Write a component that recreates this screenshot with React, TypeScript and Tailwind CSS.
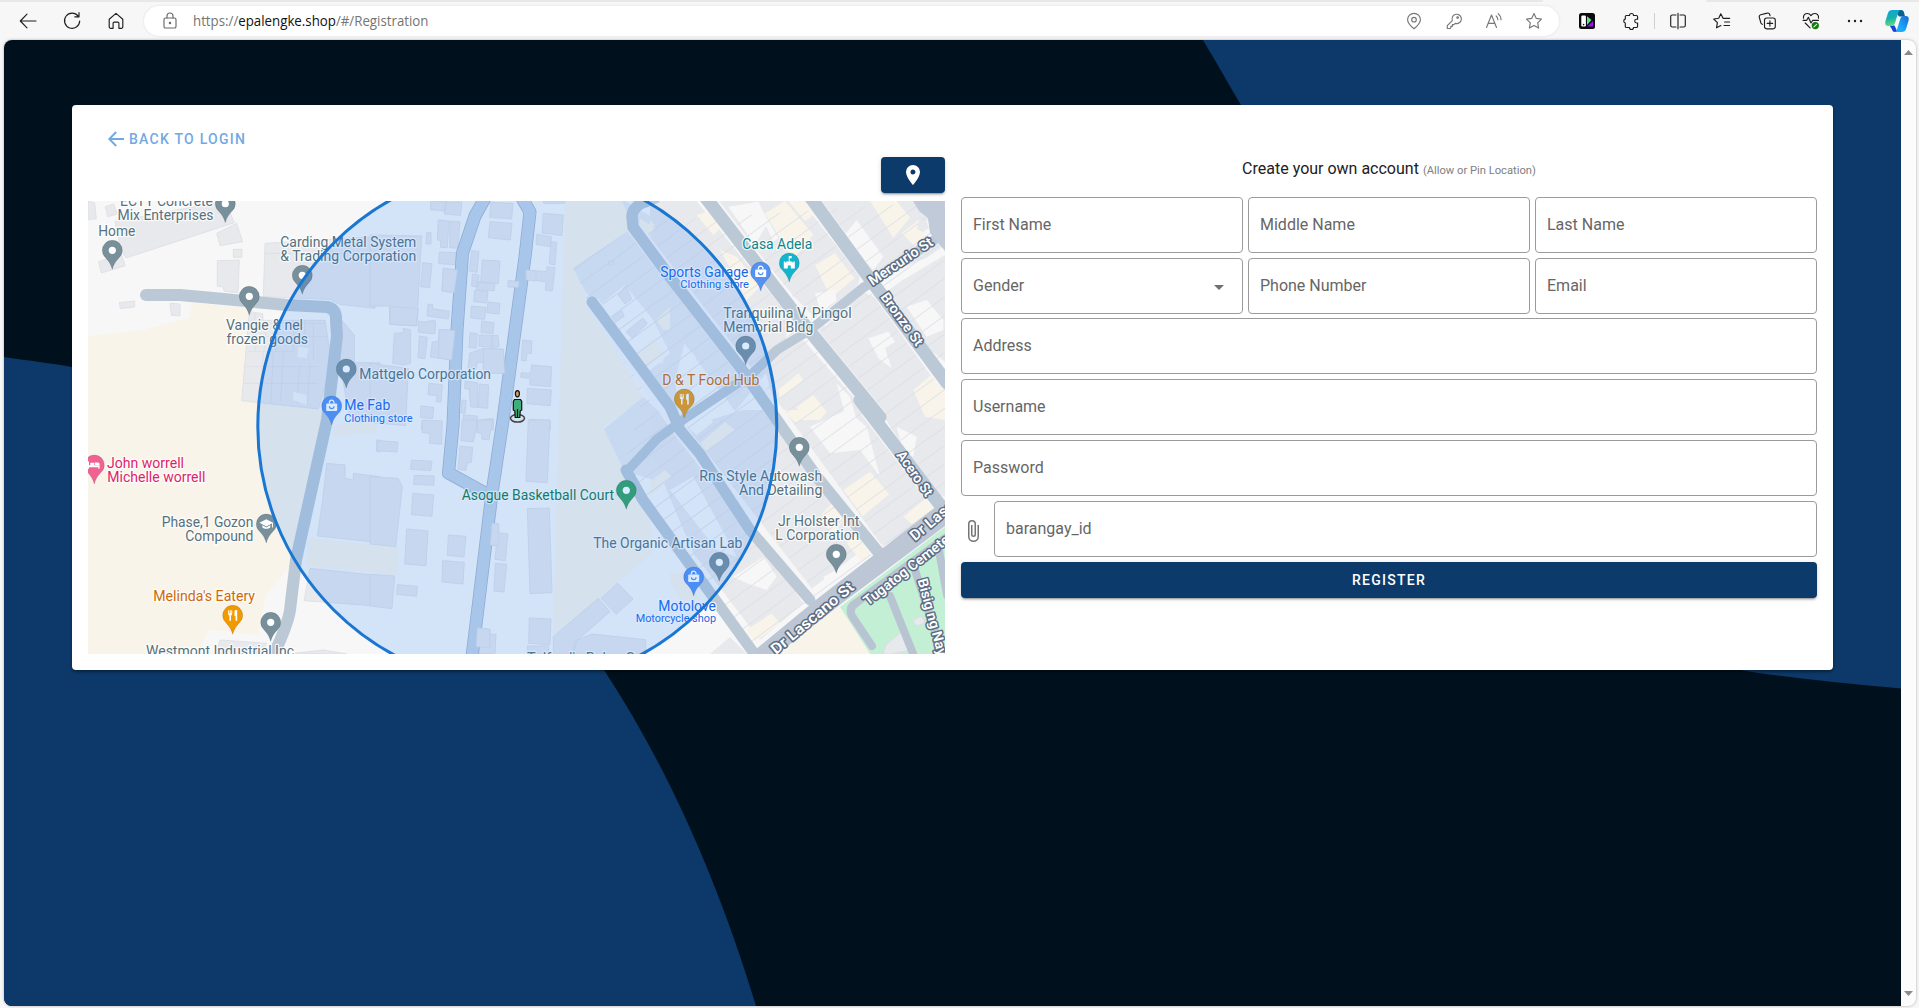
import React from "react";

const GREY = "#78909c";
const BLD = "#e8e9ed";
const EDGE = "#dcdee5";
const BEIGE = "#f9f4e9";
const ROAD = "#bbc9d6";

/* ---------- toolbar ---------- */

type IconProps = { children: React.ReactNode; color?: string; size?: number };

const Line = ({ children, color = "#1f1f1f", size = 20 }: IconProps) => (
  <svg width={size} height={size} viewBox="0 0 20 20" fill="none" stroke={color} strokeWidth={1.15} strokeLinecap="round" strokeLinejoin="round">
    {children}
  </svg>
);

const Cell = ({ children, className = "w-11" }: { children: React.ReactNode; className?: string }) => (
  <button className={`flex h-8 shrink-0 items-center justify-center ${className}`}>{children}</button>
);

const STAR = "M10 2.6l2.3 4.8 5.2.7-3.8 3.7.9 5.3L10 14.6l-4.6 2.5.9-5.3L2.5 8.1l5.2-.7z";

function Toolbar() {
  return (
    <header className="h-10 shrink-0 bg-[#f7f7f7]">
      <div className="flex h-[2px] justify-between">
        <div className="w-[1543px] rounded-br-lg bg-[#e8e8e8]" />
        <div className="w-[213px] rounded-bl-lg bg-[#e8e8e8]" />
      </div>
      <div className="flex h-[38px] items-center pl-[6px]">
        <Cell>
          <Line><path d="M18 10H2.5M9 3.2L2.3 10 9 16.8" /></Line>
        </Cell>
        <Cell>
          <Line><path d="M16.2 5.2A7.6 7.6 0 1 0 17.7 10M17 1.6v4.2h-4.2" /></Line>
        </Cell>
        <Cell>
          <Line><path d="M3.2 8.2L10 2.4l6.8 5.8v7.6a1.5 1.5 0 0 1-1.5 1.5h-2.4v-5a1.2 1.2 0 0 0-1.2-1.2H8.3a1.2 1.2 0 0 0-1.2 1.2v5H4.7a1.5 1.5 0 0 1-1.5-1.5z" /></Line>
        </Cell>
        <div className="ml-[6px] flex h-[30px] w-[1415px] shrink-0 items-center rounded-full bg-white pl-4 pr-[5px] shadow-[0_0_3px_rgba(0,0,0,0.1)]">
          <Line color="#6b6b6b">
            <rect x="4" y="7" width="12" height="10" rx="1.6" />
            <path d="M7 7V5a3 3 0 0 1 6 0v2" />
            <circle cx="10" cy="12" r=".7" fill="#6b6b6b" />
          </Line>
          <svg width="237" height="24" className="ml-[13px] overflow-visible">
            <text x="0" y="17" fontFamily='"Open Sans", sans-serif' fontSize="13.6" fill="#757575" textLength="235.5" lengthAdjust="spacingAndGlyphs">
              https://<tspan fill="#111">epalengke.shop</tspan>/#/Registration
            </text>
          </svg>
          <div className="ml-auto flex">
            <Cell className="w-10">
              <Line color="#777">
                <path d="M10 17.8C6 14.4 3.6 11.600 3.600 8.700a6.400 6.400 0 0 1 12.800 0c0 2.900-2.400 5.700-6.400 9.100z" />
                <circle cx="10" cy="8.700" r="2.300" />
              </Line>
            </Cell>
            <Cell className="w-10">
              <Line color="#777">
                <path d="M8.300 9.600a4.700 4.700 0 1 1 3 2.800l-1.300 1.200H8.400v1.700H6.800v1.500l-.7.700H3.300v-2.800z" />
                <circle cx="13.600" cy="6.600" r=".8" />
              </Line>
            </Cell>
            <Cell className="w-10">
              <Line color="#777">
                <path d="M2.500 16.500L7.500 4l5 12.500M4.200 12.300h6.600M12.200 5a5 5 0 0 1 1.600 3.800M14.200 2.600a8 8 0 0 1 2.800 6.200" />
              </Line>
            </Cell>
            <Cell className="w-10">
              <Line color="#777"><path d={STAR} /></Line>
            </Cell>
          </div>
        </div>
        <div className="ml-[6px] flex">
          <Cell>
            <svg width="16" height="16" viewBox="0 0 16 16">
              <rect width="16" height="16" rx="2.500" fill="#0b0b0f" />
              <rect x="2.300" y="2.500" width="4.600" height="11" rx="1.200" fill="#fff" />
              <circle cx="4.600" cy="11.600" r=".8" fill="#111" />
              <path d="M8 3.200L12.500 7 8 12z" fill="#5ee08f" />
              <path d="M8.300 13.600L14 8v5.600z" fill="#a30cf5" />
            </svg>
          </Cell>
          <Cell>
            <Line>
              <path d="M5.500 4.500h3a2 2 0 0 1 4 0h2.800a1.300 1.300 0 0 1 1.300 1.300v2.400h-1a1.900 1.900 0 0 0 0 3.800h1v3.200a1.300 1.300 0 0 1-1.300 1.300h-2.800a2 2 0 0 1-4 0h-3a1.200 1.200 0 0 1-1.200-1.300V12a2 2 0 0 1 0-3.900V5.800a1.200 1.200 0 0 1 1.200-1.300z" />
            </Line>
          </Cell>
        </div>
        <div className="mx-px h-4 w-px shrink-0 bg-[#cfcfcf]" />
        <div className="flex">
          <Cell>
            <Line><path d="M8 4H4.200a1.500 1.500 0 0 0-1.500 1.500v9A1.500 1.500 0 0 0 4.200 16H8M12 4h3.800a1.500 1.500 0 0 1 1.500 1.500v9a1.500 1.500 0 0 1-1.500 1.500H12M10 2.200v15.600" /></Line>
          </Cell>
          <Cell>
            <Line><path d="M11.200 7.400h6.400M12.600 11h5M12 14.500h5.600M11.200 7.400L8.800 2.800 6.700 7.300l-5 .7 3.700 3.600-.9 5.200 4.400-2.300" /></Line>
          </Cell>
          <Cell className="w-[45px]">
            <Line>
              <rect x="7.500" y="7" width="10.800" height="10.800" rx="2.200" />
              <path d="M12.900 9.700v5.400M10.200 12.400h5.400M5.500 13.300A2.200 2.200 0 0 1 3.900 12L2.300 6.300a2 2 0 0 1 1.400-2.500l6.500-1.700a2 2 0 0 1 2.500 1.400l.3 1.200" />
            </Line>
          </Cell>
          <Cell>
            <Line>
              <path d="M2.500 7.200C2 4 4.200 2.500 6.300 2.500c1.900 0 3 1 3.700 2.100.7-1.100 1.800-2.100 3.700-2.100 2.100 0 4.300 1.500 3.800 4.700M2 9.300h3.700l1.700-3 2.600 5.700 1.800-2.700h5.700M4.200 12l4.900 4.800" />
              <circle cx="14.300" cy="14.600" r="3.600" fill="#107c10" stroke="none" />
              <path d="M12.900 15.800l2.700-2.500" stroke="#d6f5d6" />
            </Line>
          </Cell>
          <Cell>
            <Line><g fill="#1f1f1f" stroke="none"><circle cx="4" cy="10" r="1.200" /><circle cx="10" cy="10" r="1.200" /><circle cx="16" cy="10" r="1.200" /></g></Line>
          </Cell>
          <Cell className="w-10">
            <svg width="24" height="24" viewBox="0 0 24 24">
              <defs>
                <linearGradient id="cpA" x1="0" y1="0" x2="0.2" y2="1">
                  <stop offset="0" stopColor="#0da4dc" />
                  <stop offset=".55" stopColor="#17b0ae" />
                  <stop offset="1" stopColor="#5fdc7c" />
                </linearGradient>
                <linearGradient id="cpB" x1="1" y1="0" x2="0" y2="1">
                  <stop offset="0" stopColor="#1d66d6" />
                  <stop offset=".6" stopColor="#19a7f8" />
                  <stop offset="1" stopColor="#1fb9fb" />
                </linearGradient>
              </defs>
              <path d="M9 1h7c2 0 2.600 1.200 3.200 3.200L20 7.500h-6z" fill="#0a5f8c" />
              <path d="M4.500 16.500h5l3 6.500H10c-2 0-2.700-1.300-3.300-3.300z" fill="#1546d8" />
              <path d="M7.500 1H16c-1.500 0-2.300 1.200-3 3.300L10.300 13c-.8 2.700-1.700 4-3.800 4H3.200C.6 17-.2 15 .4 12.500l2.400-8C3.700 1.800 5 1 7.500 1z" fill="url(#cpA)" />
              <path d="M16.500 23H9.300c1.500 0 2.300-1.200 2.900-3.300L14.900 11c.8-2.700 1.500-4 3.600-4h2.300c2.600 0 3.400 2 2.800 4.500l-2.400 8c-.9 2.700-2.200 3.500-4.700 3.500z" fill="url(#cpB)" />
            </svg>
          </Cell>
        </div>
      </div>
    </header>
  );
}

/* ---------- map ---------- */

type Glyph = "dot" | "bag" | "fork" | "cap" | "bed" | "castle";

const Pin = ({ x, y, c = GREY, g = "dot" }: { x: number; y: number; c?: string; g?: Glyph }) => (
  <g transform={`translate(${x} ${y})`}>
    <path d="M0 19C-1.400 13.500-3.800 10.800-6.500 7.600A10 10 0 1 1 6.500 7.600C3.800 10.800 1.400 13.500 0 19z" fill={c} stroke="#000" strokeOpacity=".18" strokeWidth=".7" />
    {g === "dot" && <circle r="3.600" fill="#fff" />}
    {g === "bag" && (
      <g>
        <rect x="-5.500" y="-2.500" width="11" height="7.500" rx="1" fill="#fff" />
        <path d="M-2.300-2.500v-1a2.300 2.300 0 0 1 4.600 0v1" fill="none" stroke="#fff" strokeWidth="1.300" />
        <path d="M-2.300.3a2.300 2.300 0 0 0 4.600 0" fill="none" stroke={c} strokeWidth="1.200" />
      </g>
    )}
    {g === "fork" && (
      <path d="M-4.500-5v3.500c0 1 .5 1.500 1.200 1.700V5.500h1.600V.2c.7-.2 1.200-.7 1.200-1.700V-5h-.9v3h-.6v-3h-1v3h-.6v-3zM1.800-4v4.700h1V5.500h1.700V-5.300C2.800-5.300 1.800-4.800 1.800-4z" fill="#fff" />
    )}
    {g === "cap" && (
      <g>
        <path d="M0-4.800L6.800-1.200 0 2.500-6.800-1.200z" fill="#fff" />
        <path d="M-4 1.300V3.200C-2 5.300 2 5.300 4 3.200V1.300L0 3.500zM5.700-1h.9v4.500h-.9z" fill="#fff" />
      </g>
    )}
    {g === "bed" && <path d="M-6.500-3.500h1.200V.3H-4v-2.500h4V.3h5.300V3.800h-1.200V2.200H-5.300v1.600h-1.200zM.6-2.500h2.900c1 0 1.800.8 1.800 1.800v.6H.6z" fill="#fff" />}
    {g === "castle" && <path d="M-5.500-1.500h1.400v1h1v-1h2.500V-7h3v2.300H.3v3.200h2.800v1h1v-1h1.400V5.500H1.500V2.600h-3v2.900h-4z" fill="#fff" />}
  </g>
);

type Lbl = { x: number; y: number; w: number; t: string; c?: string; s?: number };

const SLATE = "#56717d";
const BLUE = "#1967e8";

const LABELS: Lbl[] = [
  { x: 120, y: 206, w: 93, t: "ECTY Concrete" },
  { x: 117.5, y: 220, w: 96, t: "Mix Enterprises" },
  { x: 98.3, y: 236, w: 37, t: "Home" },
  { x: 280.3, y: 247, w: 136, t: "Carding Metal System" },
  { x: 280.3, y: 261, w: 136, t: "& Trading Corporation" },
  { x: 226, y: 330.3, w: 77, t: "Vangie & nel" },
  { x: 226.5, y: 344.3, w: 81.5, t: "frozen goods" },
  { x: 359.3, y: 379, w: 131.7, t: "Mattgelo Corporation" },
  { x: 344.3, y: 410, w: 46, t: "Me Fab", c: BLUE },
  { x: 344.3, y: 421.7, w: 68.4, t: "Clothing store", c: BLUE, s: 11 },
  { x: 107, y: 468, w: 77, t: "John worrell", c: "#e01e6a" },
  { x: 107.3, y: 482, w: 98, t: "Michelle worrell", c: "#e01e6a" },
  { x: 161.7, y: 527, w: 91.7, t: "Phase,1 Gozon" },
  { x: 185.3, y: 541, w: 68, t: "Compound" },
  { x: 153.3, y: 601, w: 101.7, t: "Melinda's Eatery", c: "#cd6a0b" },
  { x: 146, y: 655.5, w: 148, t: "Westmont Industrial Inc" },
  { x: 461.7, y: 500, w: 152.3, t: "Asogue Basketball Court", c: "#13794a" },
  { x: 593.3, y: 548, w: 149, t: "The Organic Artisan Lab" },
  { x: 658.3, y: 610.7, w: 57.7, t: "Motolove", c: BLUE },
  { x: 635.7, y: 621.7, w: 80.3, t: "Motorcycle shop", c: BLUE, s: 11 },
  { x: 527, y: 662.5, w: 116, t: "Telford's Baker Sq" },
  { x: 742.3, y: 249, w: 70, t: "Casa Adela", c: "#0b868d" },
  { x: 660.3, y: 277, w: 88, t: "Sports Garage", c: BLUE },
  { x: 680.3, y: 288, w: 68.7, t: "Clothing store", c: BLUE, s: 11 },
  { x: 723.3, y: 318, w: 128.3, t: "Tranquilina V. Pingol" },
  { x: 723.3, y: 332, w: 90, t: "Memorial Bldg" },
  { x: 662.3, y: 385, w: 97, t: "D & T Food Hub", c: "#cd6a0b" },
  { x: 699.3, y: 481, w: 123, t: "Rns Style Autowash" },
  { x: 739, y: 495, w: 83.3, t: "And Detailing" },
  { x: 778, y: 526, w: 81.3, t: "Jr Holster Int" },
  { x: 775.3, y: 540, w: 84, t: "L Corporation" },
];

type Street = { x: number; y: number; r: number; w: number; t: string; s?: number };

const STREETS: Street[] = [
  { x: 872.5, y: 286, r: -34, w: 74, t: "Mercurio St" },
  { x: 880, y: 297, r: 54, w: 62, t: "Bronze St" },
  { x: 896, y: 455, r: 55, w: 52, t: "Acero St" },
  { x: 776, y: 655, r: -40, w: 103, t: "Dr Lascano St", s: 15 },
  { x: 915, y: 541.5, r: -40, w: 97, t: "Dr Lascano St", s: 15 },
  { x: 868, y: 606, r: -38, w: 117, t: "Tugatog Cemetery" },
  { x: 917.5, y: 580, r: 75, w: 112, t: "Bisig ng Nayon St" },
];

/* Each sheet holds footprints in thirds of a pixel, relative to its own corner. */
const Sheet = ({ x, y, d, fill = BLD, edge = EDGE }: { x: number; y: number; d: string; fill?: string; edge?: string }) => (
  <path transform={`translate(${x} ${y}) scale(.33333)`} d={d} fill={fill} stroke={edge} strokeWidth="2.500" />
);

const NW =
  "M24 33l20 5 5 48-25 3zM76 50l25-8 10 30-28 8zM105 95l330-62 28 65-325 106-15-25zM410 130l60-30 18 55-68 12zM56 215l68-22 12 34-72 22zM460 178h26v24h-26zM412 212l66-2-4 98-42-4-2-13-18-2zM118 338l46-5v18l-43 5zM270 340l30 2v36l-26-2zM555 160l335-20-5 215-105-12-30-15-200-8zM508 365l40 6 1 20 186 0 20 130-40 136-230-25zM785 390l38 45v82l-42 10zM780 518h120v180l-90-5z";
const NW_LINES =
  "M508 400h230M500 440h240M505 485h140M495 530h220M490 580h225M550 485l-10 150M580 485l-8 155M610 485l-8 150M525 370v115M560 400l-8 85M595 400l-8 85M640 390v90M675 390v90M700 400v110M660 520l-10 120M690 520l-8 125M555 190h335";
const SW =
  "M740 130l55 5v40l25 5v-20l80 10v198l-188-20 15-100zM690 445l210 22v92l-228-17zM890 60h10v35h-10zM640 700l90-10 70 12zM420 660l140 10-10 30H410z";
const CN =
  "M183 33h48l-5 30-45-4zM226 36h50l-5 40-48-4zM362 37l67 3-4 47-66-5zM360 95l66 5-5 50-66-7zM205 90l32 3-5 80-20-1v-20l-10-2zM240 93l30 2-7 80-24-2zM170 128h13v34h-15zM208 186l50 2v36l-52-3zM305 182l22 3-6 62-24-4zM158 218l28 3-7 72-27-3zM220 235l42 5-10 68-36-5zM337 210l53 3-5 68-53-3zM307 252l20 3-3 36-19-2zM321 275l54 5-2 22-54-3zM415 272l32 3-2 17-31-2zM468 240l62 5 1-15 24 3-8 70-21-3 2-25-60-7zM520 70l60 5-4 62-60-8zM500 133l45 7-4 30-43-7zM543 155l17 2-5 68-17-3zM314 300l40 5-4 34-39-4zM354 336l36 4-3 32-36-4zM304 348l44 4-4 36-42-4zM174 342l14 2v12l50 8-3 23-64-9zM146 393l18 3 30-6 3 5-2 36-30-2-20-3zM335 393l37 5-3 33-36-4zM208 418l47 4-10 88-64-9 6-45 18-3zM300 428l22 3-3 44-22-3zM328 435l37 1v36l-38-3zM366 436h18l3 34-22 2zM148 438l24 4-7 64-21-3zM340 475l60 3 4 72-64-2v-30h-18l-4 20-24-4 5-44zM458 450l28 3-2 38-13-2-3 24-14-2zM485 525l60 5-3 60-62-5v-20l-28-3 2-14 28 2zM472 595l72 5-3 47-70-6zM478 688l63 3v29h-66zM177 580l40 4-4 52-14-1 2-18-27-3zM285 573l38 5v75l-22-3-3-52-14-2zM328 582l28 3-3 70-28-3zM276 630l13 1-4 40-12-2zM153 648l38 4-3 34-37-4zM280 675l42 3v42h-44zM156 693l58 5v22h-60zM330 690l40-5v35h-42zM100 415l22 5v100l-22 5-32-5 5-90 27-2zM0 135l155 3-15 270-80-5-2-55-58 0zM60 350l85 5-5 52-80-4zM0 520l115 15-8 172-107-10zM520 33h65l-2 7h-62z";
const CS =
  "M24 62l60 4-3 30-60-4zM124 120l62 4-4 28-60-4zM133 166l60 2-2 28-60-3zM128 220l63 5-5 64-62-5zM0 170l85 5 12 25-20 180-77-8zM110 327l64 6-6 104-64-5zM235 345l53 4-6 62-50-5zM218 422l65 5-4 65-63-6zM0 463l74 5-8 98-66-8zM82 494l60 5-2 30-60-6zM157 0l60 3-2 70-36-3v-30l-22-2zM276 0h44v20l-10 46-37-4zM322 0h45l-10 60-22-3v-17l-14-2zM270 78l38 4-4 45-12 2-4 22-24-3zM475 0h65l-8 188-64-4zM472 266l66-2 8 254-66 3zM366 310l20 2v26l28 4-8 80-31-4 4-40-18-3zM376 430l34 3-8 83-30-3zM478 594l65 3-3 77-64-4zM322 624l38 4v15l18 0-3 57-52 0-4-20zM472 678h64v22h-64zM550 650l135-115 35 40-100 88-10 37h-60zM693 535l50-46 46 48-50 46zM665 642l162 17v41H612v-35z";

/* Angled plots between the diagonal streets. */
const NE_PLOTS =
  "M0 153h140l280 350-15 70-110 80-295-390zM205 153h250l175 225-5 25-130 100-60-60-240-290zM510 153h290l90 130-60 40-150 60zM690 440l60-45 135-80v320l-90-70zM500 545l140-120 60 30 185 260v95H700L490 580zM340 640l120-70 210 240H385z";
const SE_PLOTS =
  "M0 0h40l25 40L0 90zM110 50l170-50h70l130 190 170 220-170 130L180 150zM395 0h240l160 200 90 90-180 115-30-10L500 170zM690 0h195v260l-40-10zM0 120l70-50 140 140 250 370-130 110L130 430zM180 731l60-50 50 50z";

const EAST_BEIGE_N =
  "M345 190l60-36 85 100-60 75zM495 345l60-35 58 75-70 60zM415 153h50l30 40-30 20zM660 153h80l40 50-50 60zM755 250l50-40 35 35-45 45zM210 300l50 20 70 90-40 40-30-60zM140 195l60-20 20 50-30 30zM790 720l60-50 35 45v95l-60-10zM385 720l60-50 15 20-70 55zM440 770l50-35 40 50-20 25h-60zM0 570l40 20v50l-40 5zM95 680l30-20 25 30-40 30zM0 210l15 15-15 10z";
const EAST_BEIGE_S =
  "M580 240l80-55 58 68-80 65zM500 330l50-55 35 45-30 50zM590 400l40-30 35 60-30 25zM395 0h90l-45 40zM760 320l80-65 10 40-60 50zM290 660l75-50 25 30-75 55zM150 100l75-65 30 25-85 65zM0 215l45-35 20 20-65 60zM50 490l50 0 50 80-60 0z";
const GAPS_N =
  "M235 170l90-15 30 60-40 70zM580 260l40-50 80 110-30 40zM495 430l60-10 10 70-40 40zM560 700l40 40 20 70h-30zM655 565l60-20 20 30-30 20 20 60-40-30zM770 470l60-20 50 60v30l-50 20zM830 210l20 10v40l-30 0zM100 620l25-15 15 20-25 18zM330 190l15 5 40 70-15 10z";
const GAPS_S =
  "M480 50l60 80 90-10 60 80-40-150-60-50zM520 500l40-20 10 30-30 25zM250 500l90-60 40 60-30 40-60-20zM60 240l70-40 130 240-60-20zM110 50l60-35 20 20-50 40zM740 50l60 30-10 60-30-10z";

function MapView() {
  const plots = (ox: number, oy: number, d: string, fill: string) => (
    <path transform={`translate(${ox} ${oy}) scale(.33333)`} d={d} fill={fill} />
  );
  return (
    <svg viewBox="88 201 857 453" className="block h-[453px] w-full" fontFamily="Roboto, sans-serif">
      <defs>
        <pattern id="parcels" width="90" height="15" patternUnits="userSpaceOnUse" patternTransform="rotate(-36)">
          <path d="M0 .5h90" stroke={EDGE} strokeWidth=".8" fill="none" />
        </pattern>
        <clipPath id="east"><path d="M565 201H945V654H553V637L653 552 603 427 573 268 627 225 622 201z" /></clipPath>
      </defs>
      <rect x="88" y="201" width="857" height="453" fill="#f7f7f7" />

      {/* open land */}
      <path d="M88 336l55-6 46-12 3-15 60 5 8 32-14 60 65 10-18 85-25 90-10 50-50-5-10 24H88z" fill={BEIGE} />
      <path d="M245 400l82 10-32 150-50 60z" fill={BEIGE} />
      <path d="M308 538l90 9v28l-92-9zM250 404l76 8-20 96-30 60-20-100z" fill={BEIGE} />

      <Sheet x={80} y={190} d={NW} />
      <path transform="translate(80 190) scale(.33333)" d={NW_LINES} fill="none" stroke={EDGE} strokeWidth="2.500" />
      <Sheet x={80} y={190} d="M655 470l30 5-5 30-28-4zM640 605l40 10v30l-40-15z" fill="#f5f5f5" edge="none" />
      <Sheet x={80} y={420} d={SW} />
      <Sheet x={80} y={190} d="M760 710l80-30 50 8v40l-130 10z" fill={BEIGE} edge="none" />
      <path d="M344 403h60v20h-50z" fill={BLD} />

      {/* east blocks */}
      {plots(650, 150, NE_PLOTS, BLD)}
      {plots(650, 410, SE_PLOTS, BLD)}
      <path d="M573 268l46-34 12-3 60 86-16 64 5 40-70-90-25-40zM603 430l40-33 20 18 40 50 45 70-20 20-60-70-30-10-30 0zM585 205l40-4 100 60 60 90-50 60-90-120z" fill={BLD} opacity=".95" />
      {plots(650, 150, EAST_BEIGE_N, BEIGE)}
      {plots(650, 410, EAST_BEIGE_S, BEIGE)}
      {plots(650, 150, GAPS_N, "#f7f7f7")}
      {plots(650, 410, GAPS_S, "#f7f7f7")}
      {plots(370, 190, "M690 345l75-60 85 105 50 100-70 60zM635 290l40 50-25 20z", "#f7f7f7")}
      {plots(370, 190, "M800 495l50-50 33 45-50 40zM858 390l42-40v70l-20 0zM810 85l45 30-20 25-30-30z", BEIGE)}
      <Sheet x={370} y={190} d="M745 315l22-28 18 40-20 15zM727 380l28-18 8 16-27 20zM768 425l50-40 14 15-45 45zM715 215l15-5 3 12-15 5z" />
      {plots(370, 420, "M553 640l300-250 47 20v290H550z", "#f7f7f7")}
      <g clipPath="url(#east)">
        <path d="M573 268l60-45 312-22v300L817 600l-64 50-103-143-27-40 20-70-60-100z" fill="url(#parcels)" />
      </g>
      <path d="M565 201h57l12 26-61 41 9 19 5 14 56 96-40 30 20 41 27 49 3 35-100 85z" fill={BEIGE} />
      <Sheet x={370} y={190} d={CN} />
      <Sheet x={370} y={420} d={CS} />

      {/* waterway */}
      <g fill="none" strokeLinejoin="round">
        <path d="M485 198l-10 18-12.500 37-5.500 77-4 95-4.500 48 40 22" stroke="#a3b3cb" strokeWidth="13" />
        <path d="M522 198l8 14-5 45-22 163-11 73-20 164" stroke="#a3b3cb" strokeWidth="13" />
        <path d="M485 198l-10 18-12.500 37-5.500 77-4 95-4.500 48 42 23" stroke="#c3d3e6" strokeWidth="11.500" />
        <path d="M522 198l8 14-5 45-22 163-11 73-20 164" stroke="#c3d3e6" strokeWidth="11.500" />
      </g>
      <Sheet x={370} y={190} d="M415 272l32 3-2 17-31-2zM220 235l42 5-10 68-36-5zM340 475l60 3 4 72-64-2zM468 240l30 3v30l-30-4zM208 418l47 4-10 88-40-6z" />
      <Sheet x={370} y={420} d="M366 310l20 2v66l-25-3zM322 624l38 4v55l-41-3z" />

      {/* park */}
      <path d="M840 607l105-80v127h-75z" fill="#c3f0d5" />
      <path d="M774 654l65-48 31 48z" fill={BEIGE} />
      <path d="M886 645l14-12 7-3 4 20-20 4h-8zM913 620l9-4 3 7-9 3z" fill={BLD} stroke={EDGE} />

      {/* streets */}
      <g fill="none" stroke="#f5f5f6" strokeWidth="14.500" strokeLinejoin="round">
        <path d="M592 302l88 128 130 168" />
        <path d="M633 227l147 190 97 134M710 201l107 139 63 77M813 201l60 82 72 100M867 410l73 96" />
      </g>
      <g fill="none" stroke={ROAD} strokeWidth="11" strokeLinejoin="round" strokeLinecap="round">
        <path d="M146 295h34l33 3 74 7 40 2q10 2 9 14l1 15-10 84-31 140-6 50q-2 14-16 44" strokeWidth="12" />
        <path d="M592 302l78 105 10 23 20 24 50 76 60 70" />
        <path d="M655 198l-15 6q-8 6-8 12l1 11 37 50 70 90 30 43 47 67 62 76" strokeWidth="11.500" />
        <path d="M706 198l84 109 27 33 63 77" strokeWidth="13" />
        <path d="M811 198l62 85 74 100M860 400l87 114" strokeWidth="13" />
        <path d="M626 470l17 30 110 152" />
        <path d="M940 236l-77 52-53 42-33 20-24 23-66 44-30 22-28 30" strokeWidth="9.500" />
      </g>
      <path d="M913 201h32v50l-15-18-2-15-9-7z" fill="#c0cad8" />
      <path d="M918 222l8-2 3 8-6 4-6-3z" fill={BLD} />
      <path d="M755 650l62-51 128-99v26l-108 81-62 49h-20z" fill="#bcc6d4" />
      <g fill="none" stroke="#b9c4d2" strokeWidth="8" strokeLinecap="round" strokeLinejoin="round">
        <path d="M872 646l-20-30q-4-8 4-13l89-65M890 596l24 60M913 564l30 92M938 545l9 50" />
      </g>

      {LABELS.map((l, i) => (
        <text key={i} x={l.x} y={l.y} textLength={l.w} lengthAdjust="spacingAndGlyphs" fontSize={l.s ?? 14} fill={l.c ?? SLATE} stroke="#fff" strokeOpacity=".75" strokeWidth="2.600" strokeLinejoin="round" paintOrder="stroke">
          {l.t}
        </text>
      ))}
      {STREETS.map((l, i) => (
        <text key={i} transform={`translate(${l.x} ${l.y}) rotate(${l.r})`} textLength={l.w} lengthAdjust="spacingAndGlyphs" fontSize={l.s ?? 14} fontWeight="600" fill="#fff" stroke="#5b6c84" strokeWidth="3" strokeLinejoin="round" paintOrder="stroke">
          {l.t}
        </text>
      ))}

      <Pin x={225.3} y={203.7} />
      <Pin x={112.3} y={250.3} />
      <Pin x={302.3} y={275.3} />
      <Pin x={249.3} y={296.3} />
      <Pin x={346.3} y={369} />
      <Pin x={94.3} y={465} c="#f06292" g="bed" />
      <Pin x={266.3} y={524} g="cap" />
      <Pin x={232.7} y={615.3} c="#f29900" g="fork" />
      <Pin x={270.7} y={622.3} />
      <Pin x={626.3} y={490.3} c="#34a362" />
      <Pin x={760.7} y={272} c="#5491f5" g="bag" />
      <Pin x={789.3} y={263} c="#12b5cb" g="castle" />
      <Pin x={745.7} y={346} />
      <Pin x={684.3} y={399} c="#ec9a10" g="fork" />
      <Pin x={799.3} y={447.3} />
      <Pin x={836.3} y={554.3} />
      <Pin x={719.3} y={562.3} />
      <Pin x={331.7} y={406} c="#5491f5" g="bag" />
      <Pin x={693.7} y={577} c="#5491f5" g="bag" />

      <circle cx="517.300" cy="426.500" r="259.500" fill="#2681ff" fillOpacity=".17" stroke="#1976d2" strokeWidth="3" />

      <g stroke="#111" strokeWidth="1.200">
        <ellipse cx="517.500" cy="418.300" rx="7" ry="3.800" fill="#d5e0f0" stroke="#444" strokeWidth="1.500" />
        <ellipse cx="517.400" cy="393.800" rx="2" ry="3.100" fill="#d99b6c" />
        <path d="M514.500 399.500h6l1.200 2v8.500l-1.500 1-.4 6.500h-4.600l-.4-6.500-1.500-1v-8.500z" fill="#3fae7d" />
        <path d="M517.500 409v8" />
      </g>
    </svg>
  );
}

/* ---------- form ---------- */

const Field = ({ label, select }: { label: string; select?: boolean }) => (
  <div className="flex h-14 min-w-0 flex-1 items-center justify-between rounded-[4px] border border-[#9b9b9b] bg-white pl-[11px] pr-[18px] text-base text-[#666]">
    <span>{label}</span>
    {select && (
      <svg width="10" height="5" viewBox="0 0 10 5" className="mt-1">
        <path d="M0 0h10L5 5z" fill="#707070" />
      </svg>
    )}
  </div>
);

function Form() {
  return (
    <section className="flex min-w-0 flex-1 flex-col gap-[4.8px] pt-[35.800px]">
      <h1 className="-mb-[4.800px] flex h-10 items-start justify-center gap-1 text-[16px] leading-6 text-[#212121]">
        <span>Create your own account</span>
        <small className="pt-[2px] text-[11.2px] leading-6 text-[#808080]">(Allow or Pin Location)</small>
      </h1>
      <div className="flex gap-[5px]">
        <Field label="First Name" />
        <Field label="Middle Name" />
        <Field label="Last Name" />
      </div>
      <div className="flex gap-[5px]">
        <Field label="Gender" select />
        <Field label="Phone Number" />
        <Field label="Email" />
      </div>
      <div className="flex"><Field label="Address" /></div>
      <div className="flex"><Field label="Username" /></div>
      <div className="flex"><Field label="Password" /></div>
      <div className="flex items-center">
        <svg width="24" height="24" viewBox="0 0 24 24" className="mr-[9px] mt-1 shrink-0" fill="#757575">
          <path d="M16.500 6v11.500a4 4 0 0 1-8 0V5a2.500 2.500 0 0 1 5 0v10.500a1 1 0 0 1-2 0V6H10v9.500a2.500 2.500 0 0 0 5 0V5a4 4 0 0 0-8 0v12.500a5.500 5.500 0 0 0 11 0V6z" />
        </svg>
        <Field label="barangay_id" />
      </div>
      <button className="h-9 rounded-[4px] bg-[#0c3a6a] pt-px text-sm font-medium tracking-[1.25px] text-white shadow-[0_3px_1px_-2px_rgba(0,0,0,.2),0_2px_2px_rgba(0,0,0,.14),0_1px_5px_rgba(0,0,0,.12)]">
        REGISTER
      </button>
    </section>
  );
}

const ScrollArrow = ({ down }: { down?: boolean }) => (
  <svg width="9" height="5" viewBox="0 0 9 5" className={down ? "rotate-180" : ""}>
    <path d="M0 5L4.500 0 9 5z" fill="#8a8a8a" />
  </svg>
);

export default function App() {
  return (
    <div className="flex h-[1008px] w-[1919px] flex-col overflow-hidden bg-[#f7f7f7] font-['Roboto',sans-serif]">
      <Toolbar />
      <div className="mx-[3px] ml-1 flex h-[966px] w-[1912px] overflow-hidden rounded-lg bg-[#fcfcfc] shadow-[0_0_3px_rgba(0,0,0,.3)]">
        <main className="relative w-[1897px] shrink-0 bg-[#00111d]">
          <svg className="absolute inset-0" width="1897" height="966" viewBox="4 40 1897 966">
            <path d="M4 357C30 361 50 363 72 367 330 400 480 480 604 670 665 763 716 874 756 1006H4z" fill="#0c3969" />
            <path d="M1203 40C1215 60 1228 83 1241 105 1350 400 1500 610 1740 670Q1793 679 1901 688.500V40z" fill="#0c3969" />
          </svg>
          <div className="relative ml-[68px] mt-[65px] h-[565px] w-[1761px] rounded-[4px] bg-white px-4 shadow-[0_2px_3px_rgba(0,0,0,.4)]">
            <div className="flex gap-4">
              <section className="w-[857px] shrink-0">
                <a className="flex h-[52px] items-center gap-[5px] pl-5 pt-4 text-sm font-medium tracking-[1.25px] text-[#72a9e4]">
                  <svg width="16" height="16" viewBox="0 0 16 16" fill="none" stroke="#72a9e4" strokeWidth="2">
                    <path d="M16 8H1.500M8.200 1L1.300 8l6.900 7" />
                  </svg>
                  <span>BACK TO LOGIN</span>
                </a>
                <div className="mb-2 flex justify-end">
                  <button className="flex h-9 w-16 items-center justify-center rounded-[4px] bg-[#0c3a6a] shadow-[0_3px_1px_-2px_rgba(0,0,0,.2),0_2px_2px_rgba(0,0,0,.14),0_1px_5px_rgba(0,0,0,.12)]">
                    <svg width="24" height="24" viewBox="0 0 24 24" fill="#fff">
                      <path d="M12 2a7 7 0 0 0-7 7c0 5.250 7 13 7 13s7-7.750 7-13a7 7 0 0 0-7-7zm0 9.500a2.500 2.500 0 1 1 0-5 2.500 2.500 0 0 1 0 5z" />
                    </svg>
                  </button>
                </div>
                <MapView />
              </section>
              <div className="flex w-[856px] pt-4"><Form /></div>
            </div>
          </div>
        </main>
        <div className="flex w-[15px] flex-col items-center justify-between pb-[10px] pt-[10px]">
          <ScrollArrow />
          <ScrollArrow down />
        </div>
      </div>
    </div>
  );
}
